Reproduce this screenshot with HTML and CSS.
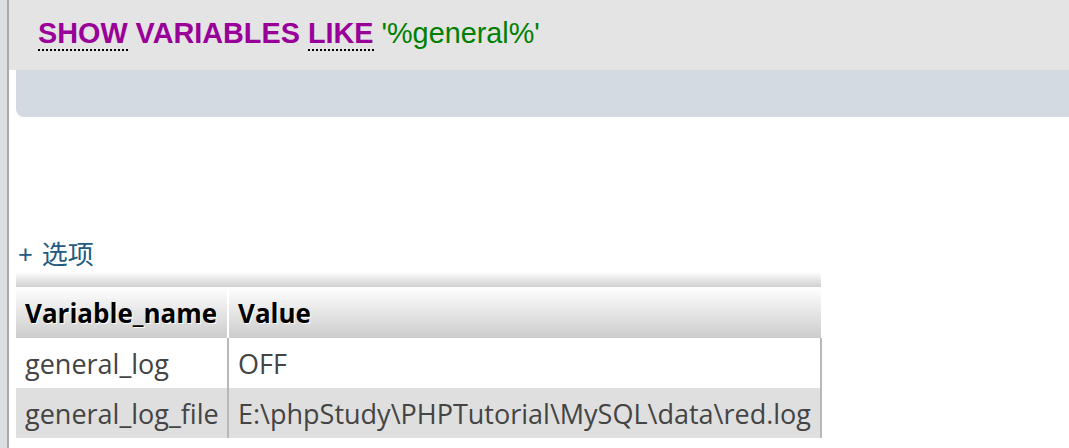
FILE: index.html
```html
<!DOCTYPE html>
<html lang="zh">
<head>
<meta charset="utf-8">
<title>SQL result</title>
<link rel="stylesheet" href="styles.css">
</head>
<body>
<div class="layout">
  <div class="sidebar"></div>
  <main class="main">
    <div class="sqlquery">
      <div class="sqlcode"><span class="kw doc">SHOW</span> <span class="kw">VARIABLES</span> <span class="kw doc">LIKE</span> <span class="str">'%general%'</span></div>
    </div>
    <div class="sqlbar"></div>
    <div class="options"><span class="plus">+</span> 选项</div>
    <div class="strip"></div>
    <table class="data">
      <thead>
        <tr><th class="c1">Variable_name</th><th class="c2">Value</th></tr>
      </thead>
      <tbody>
        <tr class="odd"><td class="c1">general_log</td><td class="c2">OFF</td></tr>
        <tr class="even"><td class="c1">general_log_file</td><td class="c2">E:\phpStudy\PHPTutorial\MySQL\data\red.log</td></tr>
      </tbody>
    </table>
  </main>
</div>
</body>
</html>
```
FILE: styles.css
```css
html, body {
  margin: 0;
  padding: 0;
  background: #fff;
}
.layout {
  display: flex;
  min-height: 448px;
}
.sidebar {
  width: 7px;
  flex: none;
  background: #dde0e3;
  border-right: 2px solid #a9a9a9;
}
.main {
  flex: 1;
  min-width: 0;
}
.sqlquery {
  background: #e4e4e4;
  height: 70px;
  box-sizing: border-box;
  padding: 16px 0 0 29px;
}
.sqlcode {
  font-family: "Liberation Sans", Arial, sans-serif;
  font-size: 28.8px;
  line-height: 34px;
  white-space: nowrap;
}
.kw {
  color: #990099;
  font-weight: bold;
}
.doc {
  border-bottom: 2px dotted #000;
}
.str {
  color: #008000;
}
.sqlbar {
  margin-left: 7px;
  height: 47px;
  background: #d3dae1;
  border-bottom-left-radius: 8px;
}
.options {
  margin: 122px 0 0 9px;
  height: 30px;
  line-height: 30px;
  font-family: "Noto Sans", "Noto Sans CJK SC", sans-serif;
  font-size: 26px;
  color: #235a81;
}
.plus {
  margin-right: 2px;
}
.strip {
  margin: 3px 0 0 7px;
  width: 805px;
  height: 15px;
  background: linear-gradient(#ffffff, #cfcfcf);
}
.data {
  margin-left: 7px;
  width: 806px;
  border-collapse: collapse;
  font-family: "Open Sans", "Noto Sans", sans-serif;
  font-size: 27px;
}
.data th, .data td {
  text-align: left;
  padding: 0 0 0 9px;
  white-space: nowrap;
}
.data .c1 {
  width: 202px;
}
.data th {
  height: 51px;
  font-size: 26px;
  color: #000;
  font-weight: bold;
  text-shadow: 1px 1px 0 #fff;
  background: linear-gradient(#ffffff, #cccccc);
}
.data th.c1 {
  border-right: 2px solid #ffffff;
}
.data td {
  height: 50px;
  color: #444;
}
.data td.c1 {
  border-right: 2px solid #b8b8b8;
}
.data td.c2 {
  border-right: 2px solid #b8b8b8;
}
.data .odd td {
  background: #ffffff;
}
.data .even td {
  background: #dfdfdf;
}
```
